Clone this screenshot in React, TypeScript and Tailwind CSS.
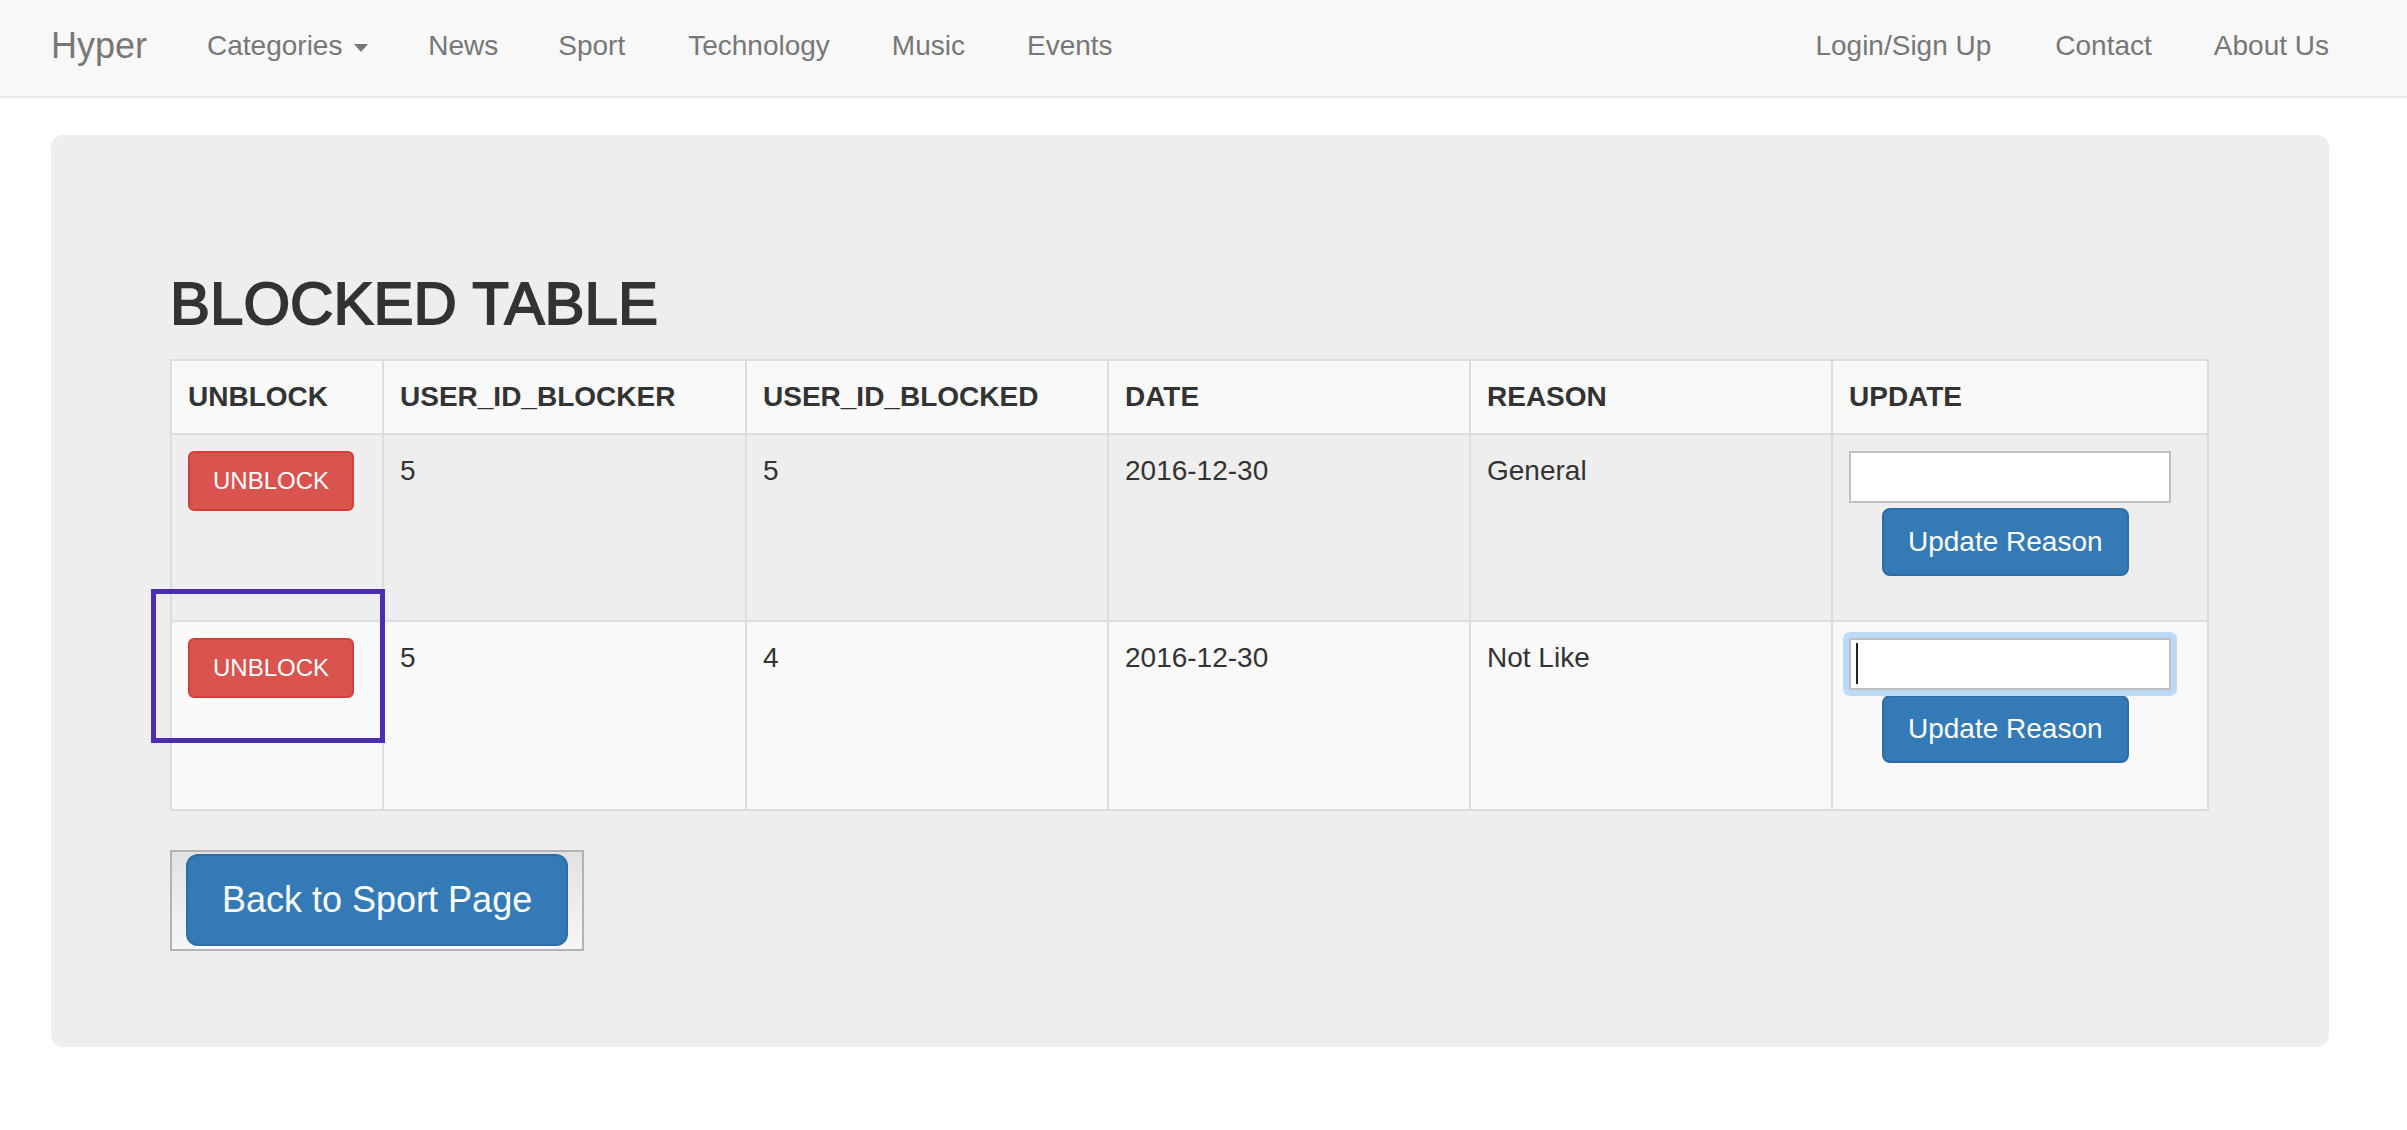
import React from 'react';

type Row = {
  blocker: string;
  blocked: string;
  date: string;
  reason: string;
  focused: boolean;
};

const rows: Row[] = [
  { blocker: '5', blocked: '5', date: '2016-12-30', reason: 'General', focused: false },
  { blocker: '5', blocked: '4', date: '2016-12-30', reason: 'Not Like', focused: true },
];

const headers = ['UNBLOCK', 'USER_ID_BLOCKER', 'USER_ID_BLOCKED', 'DATE', 'REASON', 'UPDATE'];

const NavLink: React.FC<{ label: string; caret?: boolean; className?: string }> = ({ label, caret, className = '' }) => (
  <a className={`px-[30px] pt-[26px] leading-[40px] text-[28px] text-[#777] whitespace-nowrap ${className}`}>
    {label}
    {caret && (
      <>
        {' '}
        <span className="ml-[4px] inline-block h-0 w-0 border-x-[7px] border-t-[8px] border-x-transparent border-t-[#777] align-middle" />
      </>
    )}
  </a>
);

const App: React.FC = () => {
  return (
    <div className="min-h-[1130px] bg-white font-['Liberation_Sans',Arial,sans-serif] text-[#333]">
      {/* navbar */}
      <nav className="flex h-[98px] justify-between border-b-2 border-[#e7e7e7] bg-[#f8f8f8]">
        <div className="flex items-start">
          <a className="ml-[21px] px-[30px] pt-[26px] leading-[40px] text-[36px] text-[#777]">Hyper</a>
          <NavLink label="Categories" caret />
          <NavLink label="News" />
          <NavLink label="Sport" />
          <NavLink label="Technology" className="ml-[3px]" />
          <NavLink label="Music" className="ml-[2px]" />
          <NavLink label="Events" className="ml-[2px]" />
        </div>
        <div className="flex items-start pr-[48px]">
          <NavLink label="Login/Sign Up" className="mr-[4px]" />
          <NavLink label="Contact" className="mr-[2px]" />
          <NavLink label="About Us" />
        </div>
      </nav>

      {/* jumbotron */}
      <div className="mt-[37px] ml-[51px] w-[2278px] rounded-[12px] bg-[#eeeeee] pt-[96px] pb-[96px] pl-[119px] pr-[120px]">
        <h2 className="mt-[40px] mb-[22px] text-[60px] leading-[66px] font-normal [-webkit-text-stroke:1.8px_#333]">
          BLOCKED TABLE
        </h2>

        <div className="relative">
          <table className="w-[2039px] table-fixed border-separate border-spacing-0 border-l-2 border-t-2 border-[#ddd] text-[28px] leading-[40px]">
            <colgroup>
              <col className="w-[212px]" />
              <col className="w-[363px]" />
              <col className="w-[362px]" />
              <col className="w-[362px]" />
              <col className="w-[362px]" />
              <col className="w-[376px]" />
            </colgroup>
            <thead>
              <tr className="bg-[#f9f9f9]">
                {headers.map((h) => (
                  <th key={h} className="border-r-2 border-b-2 border-[#ddd] p-[16px] text-left align-bottom font-bold">
                    {h}
                  </th>
                ))}
              </tr>
            </thead>
            <tbody>
              {rows.map((r, i) => (
                <tr key={i} className={i % 2 === 0 ? 'bg-[#eeeeee]' : 'bg-[#f9f9f9]'}>
                  <td className="border-r-2 border-b-2 border-[#ddd] p-[16px] align-top">
                    <button className="rounded-[6px] border-2 border-[#d43f3a] bg-[#d9534f] px-[23px] py-[10px] text-[24px] leading-[36px] text-white">
                      UNBLOCK
                    </button>
                  </td>
                  <td className="border-r-2 border-b-2 border-[#ddd] p-[16px] align-top">{r.blocker}</td>
                  <td className="border-r-2 border-b-2 border-[#ddd] p-[16px] align-top">{r.blocked}</td>
                  <td className="border-r-2 border-b-2 border-[#ddd] p-[16px] align-top">{r.date}</td>
                  <td className="border-r-2 border-b-2 border-[#ddd] p-[16px] align-top">{r.reason}</td>
                  <td className="border-r-2 border-b-2 border-[#ddd] p-[16px] align-top">
                    <div className={`flex w-[322px] flex-col items-start ${i === 0 ? 'h-[153px]' : 'h-[155px]'}`}>
                      <div className="relative">
                        {r.focused && <div className="absolute -inset-[6px] rounded-[7px] bg-[#bcdaf6]" />}
                        <input
                          type="text"
                          className="relative block h-[52px] w-[322px] border-2 border-[#c0c0c0] bg-white outline-none"
                        />
                        {r.focused && <span className="absolute left-[7px] top-[5px] h-[41px] w-[2px] bg-[#222]" />}
                      </div>
                      <button className="mt-[5px] ml-[33px] rounded-[8px] border-2 border-[#2e6da4] bg-[#337ab7] px-[24px] py-[12px] text-[28px] leading-[40px] text-white">
                        Update Reason
                      </button>
                    </div>
                  </td>
                </tr>
              ))}
            </tbody>
          </table>

          {/* annotation box */}
          <div className="absolute left-[-19px] top-[230px] h-[154px] w-[234px] border-[5px] border-[#4b2db2]" />
        </div>

        <div className="mt-[39px] inline-block border-2 border-[#b3b3b3] bg-gradient-to-b from-[#e2e2e2] to-[#f6f6f6] px-[14px] pt-[2px] pb-[3px]">
          <a className="block rounded-[12px] border-2 border-[#2e6da4] bg-[#337ab7] px-[34px] py-[20px] text-[36px] leading-[48px] text-white">
            Back to Sport Page
          </a>
        </div>
      </div>
    </div>
  );
};

export default App;
